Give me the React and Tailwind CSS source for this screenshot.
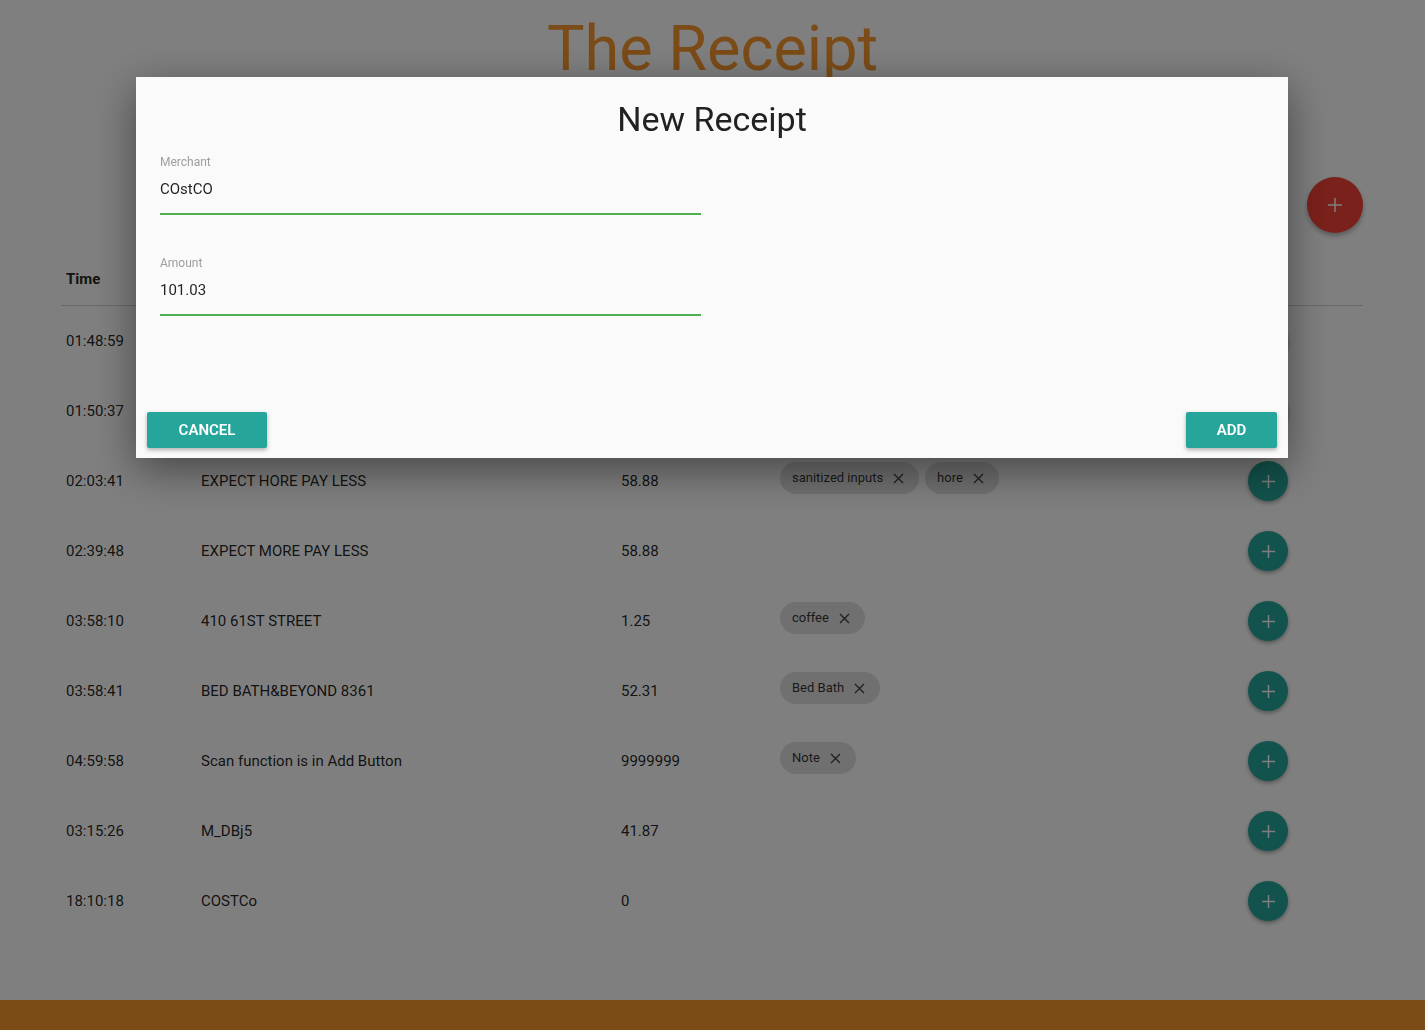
import React from "react";

const rows = [
  { t: "01:48:59", m: "Trader Joe's", a: "23.10", tags: [] },
  { t: "01:50:37", m: "WHOLE FOODS", a: "12.45", tags: [] },
  { t: "02:03:41", m: "EXPECT HORE PAY LESS", a: "58.88", tags: ["sanitized inputs", "hore"] },
  { t: "02:39:48", m: "EXPECT MORE PAY LESS", a: "58.88", tags: [] },
  { t: "03:58:10", m: "410 61ST STREET", a: "1.25", tags: ["coffee"] },
  { t: "03:58:41", m: "BED BATH&BEYOND 8361", a: "52.31", tags: ["Bed Bath"] },
  { t: "04:59:58", m: "Scan function is in Add Button", a: "9999999", tags: ["Note"] },
  { t: "03:15:26", m: "M_DBj5", a: "41.87", tags: [] },
  { t: "18:10:18", m: "COSTCo", a: "0", tags: [] },
];

function Plus({ size, stroke = 2 }) {
  return (
    <svg width={size} height={size} viewBox="0 0 16 16" fill="none">
      <path d="M8 1v14M1 8h14" stroke="white" strokeWidth={stroke} />
    </svg>
  );
}

function Chip({ label }) {
  return (
    <div className="flex h-8 items-center rounded-full bg-[#e0e0e0] pl-3 pr-[15px] text-[13px] text-[rgba(0,0,0,0.8)]">
      <span>{label}</span>
      <svg className="ml-[10px]" width="11" height="11" viewBox="0 0 11 11" fill="none">
        <path d="M1 1l9 9M10 1l-9 9" stroke="rgba(0,0,0,0.7)" strokeWidth="1.4" />
      </svg>
    </div>
  );
}

export default function App() {
  return (
    <div className="min-h-[1090px] bg-white font-['Roboto',sans-serif] text-[rgba(0,0,0,0.87)]">
      <h1 className="pt-[12px] text-center text-[63px] leading-[74px] text-[#f6982e]">The Receipt</h1>

      <div className="ml-[61px] mr-[62px]">
        <div className="mt-[91px] flex justify-end">
          <button className="flex h-14 w-14 items-center justify-center rounded-full bg-[#f44336] shadow-[0_3px_5px_rgba(0,0,0,0.3)]">
            <Plus size={16} stroke={1.5} />
          </button>
        </div>

        <div className="mt-[19px] grid h-[54px] grid-cols-[135px_420px_159px_473px_1fr] items-center border-b border-[#d3d3d3] pt-[2px] text-[15px] font-bold">
          <div className="pl-[5px]">Time</div>
          <div className="pl-[5px]">Merchant</div>
          <div className="pl-[5px]">Amount</div>
          <div className="pl-[5px]">Tags</div>
          <div />
        </div>

        {rows.map((r) => (
          <div key={r.t} className="grid h-[70px] grid-cols-[135px_420px_159px_473px_1fr] items-center text-[15px]">
            <div className="pl-[5px]">{r.t}</div>
            <div className="pl-[5px]">{r.m}</div>
            <div className="pl-[5px]">{r.a}</div>
            <div className="mb-[6px] flex gap-[6px] pl-[5px]">
              {r.tags.map((tg) => (
                <Chip key={tg} label={tg} />
              ))}
            </div>
            <div>
              <button className="flex h-10 w-10 items-center justify-center rounded-full bg-[#26a69a] shadow-[0_2px_4px_rgba(0,0,0,0.35)]">
                <Plus size={15} stroke={1.6} />
              </button>
            </div>
          </div>
        ))}
      </div>

      <footer className="mt-[64px] h-[90px] bg-[#f8982c]" />

      <div className="fixed inset-0 flex justify-start bg-black/50 pl-[136px] pt-[77px]">
        <div className="flex h-[381px] w-[1152px] flex-col bg-[#fafafa] shadow-[0_12px_40px_rgba(0,0,0,0.45)]">
          <h2 className="pt-[22px] text-center text-[34px] leading-[40px] text-[#212121]">New Receipt</h2>
          <div className="px-6">
            <div className="mt-[16px] w-[541px] border-b-2 border-[#4caf50] pb-[14px]">
              <div className="text-[12px] leading-[14px] text-[#9e9e9e]">Merchant</div>
              <div className="pt-[11px] text-[15px] leading-[19px]">COstCO</div>
            </div>
            <div className="mt-[41px] w-[541px] border-b-2 border-[#4caf50] pb-[14px]">
              <div className="text-[12px] leading-[14px] text-[#9e9e9e]">Amount</div>
              <div className="pt-[11px] text-[15px] leading-[19px]">101.03</div>
            </div>
          </div>
          <div className="mt-auto flex justify-between px-[11px] pb-[10px]">
            <button className="h-9 w-[120px] rounded-[2px] bg-[#26a69a] text-[15px] font-semibold text-white shadow-[0_2px_4px_rgba(0,0,0,0.3)]">
              CANCEL
            </button>
            <button className="h-9 w-[91px] rounded-[2px] bg-[#26a69a] text-[15px] font-semibold text-white shadow-[0_2px_4px_rgba(0,0,0,0.3)]">
              ADD
            </button>
          </div>
        </div>
      </div>
    </div>
  );
}
